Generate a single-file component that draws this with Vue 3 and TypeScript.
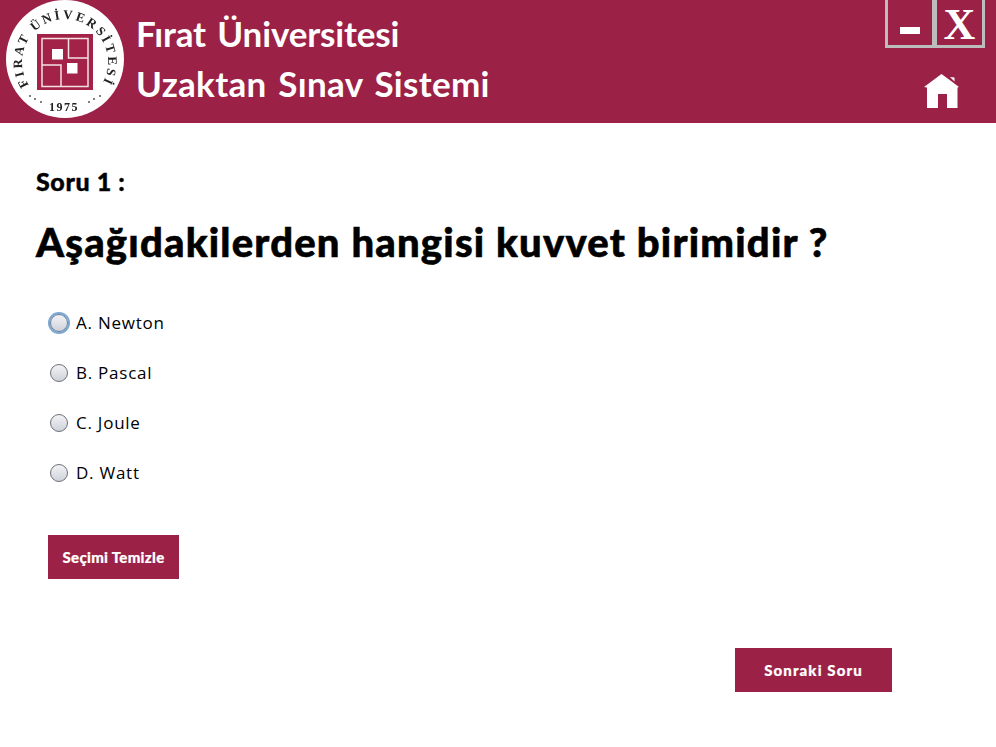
<script setup lang="ts">
const options: string[] = ['A. Newton', 'B. Pascal', 'C. Joule', 'D. Watt']
const dotsLeft: number[][] = [[30, 96], [35, 99], [41, 102]]
const dotsRight: number[][] = [[89, 102], [94, 99], [100, 96]]
</script>

<template>
  <div class="page">
    <header class="header">
      <svg class="logo" viewBox="0 0 130 123" width="130" height="123">
        <circle cx="65" cy="59" r="59" fill="#fff" />
        <defs>
          <path id="arc" d="M 28.800 85.200 A 43 43 0 1 1 92.600 95" fill="none" />
        </defs>
        <text class="ring"><textPath href="#arc" textLength="180" lengthAdjust="spacing">FIRAT ÜNİVERSİTESİ</textPath></text>
        <text x="64" y="111" text-anchor="middle" class="year">1975</text>
        <circle v-for="d in [...dotsLeft, ...dotsRight]" :key="d[0]" :cx="d[0]" :cy="d[1]" r="0.900" fill="#444" />
        <rect x="37" y="34" width="56" height="56" fill="#a32348" />
        <path d="M42 38.500h46v48h-46z M68.500 38.500v19.500h19.500 M42 65h19v21.500" fill="none" stroke="#f3dfe4" stroke-width="1.500" />
        <rect x="52" y="49" width="11" height="10.500" fill="#fff" />
        <rect x="67" y="63" width="10.500" height="10.500" fill="#fff" />
      </svg>
      <div class="titles">
        <div class="title one">Fırat Üniversitesi</div>
        <div class="title two">Uzaktan Sınav Sistemi</div>
      </div>
      <div class="controls">
        <div class="winbtns">
          <button class="winbtn min"><span class="dash"></span></button>
          <button class="winbtn close"><span class="x">X</span></button>
        </div>
        <svg class="home" viewBox="0 0 35 34" width="35" height="34">
          <path d="M17.500 0 L25 5.500 L35 13 L33.500 13.500 L33.500 34 L23 34 L23 20 L14 20 L14 34 L3 34 L3 13.500 L0 13 Z" fill="#fff" />
          <path d="M26 3 L30.500 3.500 L30.500 7.500 Z" fill="#fff" />
        </svg>
      </div>
    </header>

    <main class="content">
      <div class="qno">Soru 1 :</div>
      <h1 class="question">Aşağıdakilerden hangisi kuvvet birimidir ?</h1>
      <div class="options">
        <label v-for="(o, i) in options" :key="o" class="option">
          <span class="radio" :class="{ focused: i === 0 }"></span>
          <span>{{ o }}</span>
        </label>
      </div>
      <button class="action clear">Seçimi Temizle</button>
      <div class="next-row">
        <button class="action next">Sonraki Soru</button>
      </div>
    </main>
  </div>
</template>

<style>
html, body { margin: 0; background: #fff; }
</style>

<style scoped>
.page { width: 996px; height: 747px; overflow: hidden; background: #fff; }
.header {
  height: 123px;
  background: #9c2147;
  display: flex;
  align-items: flex-start;
  box-sizing: border-box;
}
.logo { flex: none; filter: blur(0.4px); }
.ring { font: 700 13px "Liberation Serif", serif; fill: #222; }
.year { font: 700 12px "Liberation Serif", serif; fill: #222; letter-spacing: 1.5px; }
.titles { margin-left: 6px; padding-top: 8px; display: flex; flex-direction: column; }
.title {
  font: 700 35px/50px Lato, sans-serif;
  color: #fff;
  white-space: nowrap;
  word-spacing: 3px;
}
.one { letter-spacing: -0.15px; }
.two { letter-spacing: 0.3px; }
.controls {
  margin-left: auto;
  margin-right: 11px;
  display: flex;
  flex-direction: column;
  align-items: flex-start;
}
.winbtns { display: flex; }
.winbtn {
  width: 51px;
  height: 48px;
  padding: 0;
  box-sizing: border-box;
  border: 3px solid #bdbdbd;
  border-top: 0;
  background: transparent;
  color: #fff;
  display: flex;
  align-items: center;
  justify-content: center;
}
.min { width: 50px; }
.winbtn + .winbtn { margin-left: -1px; }
.dash { width: 20px; height: 7px; background: #fff; margin-top: 15px; }
.close { font: 700 44px/30px "Liberation Serif", serif; }
.x { display: block; height: 30px; margin-top: 5px; }
.home { margin-top: 26px; margin-left: 39px; }
.content { padding: 42px 0 0 36px; }
.qno {
  font: 900 25px/32px Lato, sans-serif;
  color: #000;
  letter-spacing: 0.6px;
  -webkit-text-stroke: 0.4px #000;
}
.question {
  margin: 23px 0 0;
  font: 900 40px/44px Lato, sans-serif;
  color: #000;
  letter-spacing: 1.2px;
  -webkit-text-stroke: 0.6px #000;
}
.options { margin: 47px 0 0 13px; display: flex; flex-direction: column; gap: 26px; }
.option {
  display: flex;
  align-items: center;
  height: 24px;
  gap: 8px;
  font: 400 17px/24px "Open Sans", sans-serif;
  letter-spacing: 0.75px;
  color: #000;
}
.radio {
  width: 16px;
  height: 16px;
  border-radius: 50%;
  border: 1px solid #6e7078;
  background: linear-gradient(#f2f3f6, #cfd2da);
  margin-left: 1px;
  flex: none;
}
.radio.focused { border-color: #5c7da0; box-shadow: 0 0 0 2px #7fa8d0; }
.action {
  border: 0;
  padding: 0;
  height: 44px;
  background: #9c2147;
  color: #fff;
  font: 900 15px Lato, sans-serif;
  letter-spacing: 0.3px;
  -webkit-text-stroke: 0.2px #fff;
  display: block;
}
.clear { width: 131px; margin: 50px 0 0 12px; }
.next-row { display: flex; justify-content: flex-end; padding-right: 104px; margin-top: 69px; }
.next { width: 157px; letter-spacing: 1.1px; }
</style>
